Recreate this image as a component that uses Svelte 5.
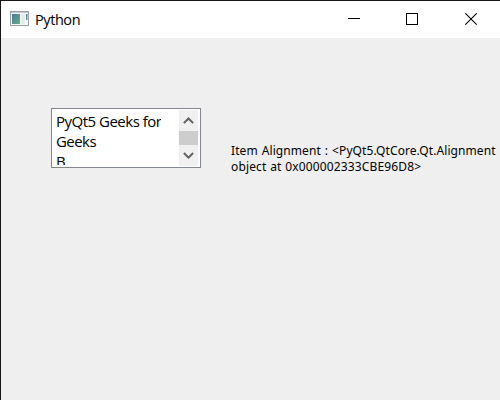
<script>
  const lines = [
    { text: 'PyQt5 Geeks for', spacing: -0.5 },
    { text: 'Geeks', spacing: -0.55 },
    { text: 'B', spacing: 0 }
  ];
</script>

<div class="window">
  <header>
    <svg class="app" width="20" height="17" viewBox="0 0 20 17">
      <defs>
        <linearGradient id="g" x1="0" y1="0" x2="1" y2="1">
          <stop offset="0" stop-color="#4878a0" />
          <stop offset="1" stop-color="#66b080" />
        </linearGradient>
      </defs>
      <rect x=".5" y=".5" width="18" height="14" fill="#f5f6f6" stroke="#9ba1a5" />
      <path d="M1 1.5H18" stroke="#c3cbd0" />
      <rect x="2" y="3" width="8" height="10" fill="url(#g)" />
      <rect x="11" y="3" width="4" height="10" fill="#e8ebeb" />
      <rect x="16" y="3" width="1.5" height="6" fill="url(#g)" />
    </svg>
    <span class="title">Python</span>
    <div class="controls">
      <svg width="13" height="13" shape-rendering="crispEdges"><path d="M0 5.5H12" stroke="#000" /></svg>
      <svg width="12" height="13"><rect x=".5" y=".5" width="11" height="11" fill="none" stroke="#000" /></svg>
      <svg width="12" height="13"><path d="M.3.3L11.7 11.7M11.7.3L.3 11.7" stroke="#000" stroke-width="1.1" /></svg>
    </div>
  </header>
  <main>
    <div class="list">
      <div class="items">
        {#each lines as line}
          <div class="line" style="letter-spacing: {line.spacing}px">{line.text}</div>
        {/each}
      </div>
      <div class="scroll">
        <svg width="19" height="21"><path d="M4.9 13.1L9.5 8.5L14.1 13.1" fill="none" stroke="#606060" stroke-width="2" /></svg>
        <div class="thumb"></div>
        <svg width="19" height="21"><path d="M4.9 8L9.5 12.6L14.1 8" fill="none" stroke="#606060" stroke-width="2" /></svg>
      </div>
    </div>
    <div class="label">
      <div class="first">Item Alignment : &lt;PyQt5.QtCore.Qt.Alignment</div>
      <div class="second">object at 0x000002333CBE96D8&gt;</div>
    </div>
  </main>
</div>

<style>
  .window {
    box-sizing: border-box;
    width: 500px;
    height: 400px;
    overflow: hidden;
    background: #efefef;
    border-top: 1px solid #161616;
    border-left: 1px solid #161616;
    color: #000;
    font-family: "Open Sans", sans-serif;
    display: flex;
    flex-direction: column;
  }
  header {
    height: 37px;
    background: #fff;
    display: flex;
    align-items: center;
    flex: none;
  }
  svg { display: block; flex: none; }
  .app { margin-left: 9px; }
  .title { margin-left: 5px; font-size: 14.5px; letter-spacing: -0.42px; }
  .controls {
    margin-left: auto;
    margin-right: 23px;
    display: flex;
    gap: 47px;
  }
  .controls svg:first-child { margin-right: -2px; }
  main {
    display: flex;
    align-items: flex-start;
    padding: 70px 0 0 50px;
  }
  .list {
    box-sizing: border-box;
    width: 150px;
    height: 60px;
    flex: none;
    display: flex;
    justify-content: space-between;
    background: #fff;
    border: 1px solid #828790;
    padding: 1px 2px 1px 4px;
  }
  .items { height: 55px; overflow: hidden; padding-top: 1px; box-sizing: border-box; }
  .line { font-size: 15px; line-height: 20px; white-space: nowrap; }
  .scroll { width: 19px; height: 56px; background: #f0f0f0; flex: none; }
  .thumb { height: 14px; background: #cdcdcd; }
  .label {
    margin: 35px 0 0 30px;
    font-family: "Noto Sans", sans-serif;
    font-size: 12px;
    line-height: 16px;
    white-space: nowrap;
  }
  .first { letter-spacing: 0.08px; word-spacing: 0.8px; }
  .second { letter-spacing: 0.15px; word-spacing: 0.4px; }
</style>
